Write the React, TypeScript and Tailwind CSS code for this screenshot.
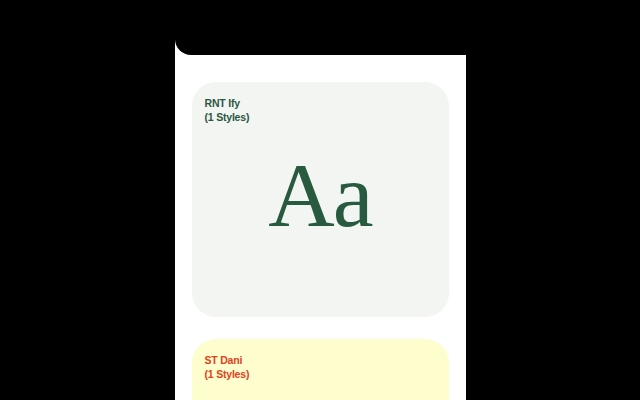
import React from "react";

export default function App() {
  return (
    <div className="w-[640px] h-[400px] bg-black overflow-hidden flex justify-center">
      <div className="w-[291px] h-full bg-white flex flex-col">
        <div className="h-[55px] bg-black rounded-bl-[16px] shrink-0" />
        <div className="flex flex-col gap-[22px] px-[17px] pt-[27px]">
          <div className="h-[235px] rounded-[24px] bg-[#f3f5f2] px-[13px] pt-[14px] flex flex-col shrink-0">
            <div
              className="text-[10.5px] leading-[14px] font-bold text-[#2b5741] tracking-[-0.2px]"
              style={{ fontFamily: '"Liberation Sans", Arial, sans-serif' }}
            >
              <div>RNT Ify</div>
              <div>(1 Styles)</div>
            </div>
            <div
              className="mt-[25px] text-center text-[92px] leading-none text-[#285a3f] tracking-[-2px]"
              style={{ fontFamily: '"Liberation Serif", "Times New Roman", serif' }}
            >
              Aa
            </div>
          </div>
          <div className="h-[235px] rounded-[24px] bg-[#fefdcd] px-[13px] pt-[14px] flex flex-col shrink-0">
            <div
              className="text-[10.5px] leading-[14px] font-bold text-[#e4401c] tracking-[-0.2px]"
              style={{ fontFamily: '"Liberation Sans", Arial, sans-serif' }}
            >
              <div>ST Dani</div>
              <div>(1 Styles)</div>
            </div>
          </div>
        </div>
      </div>
    </div>
  );
}
